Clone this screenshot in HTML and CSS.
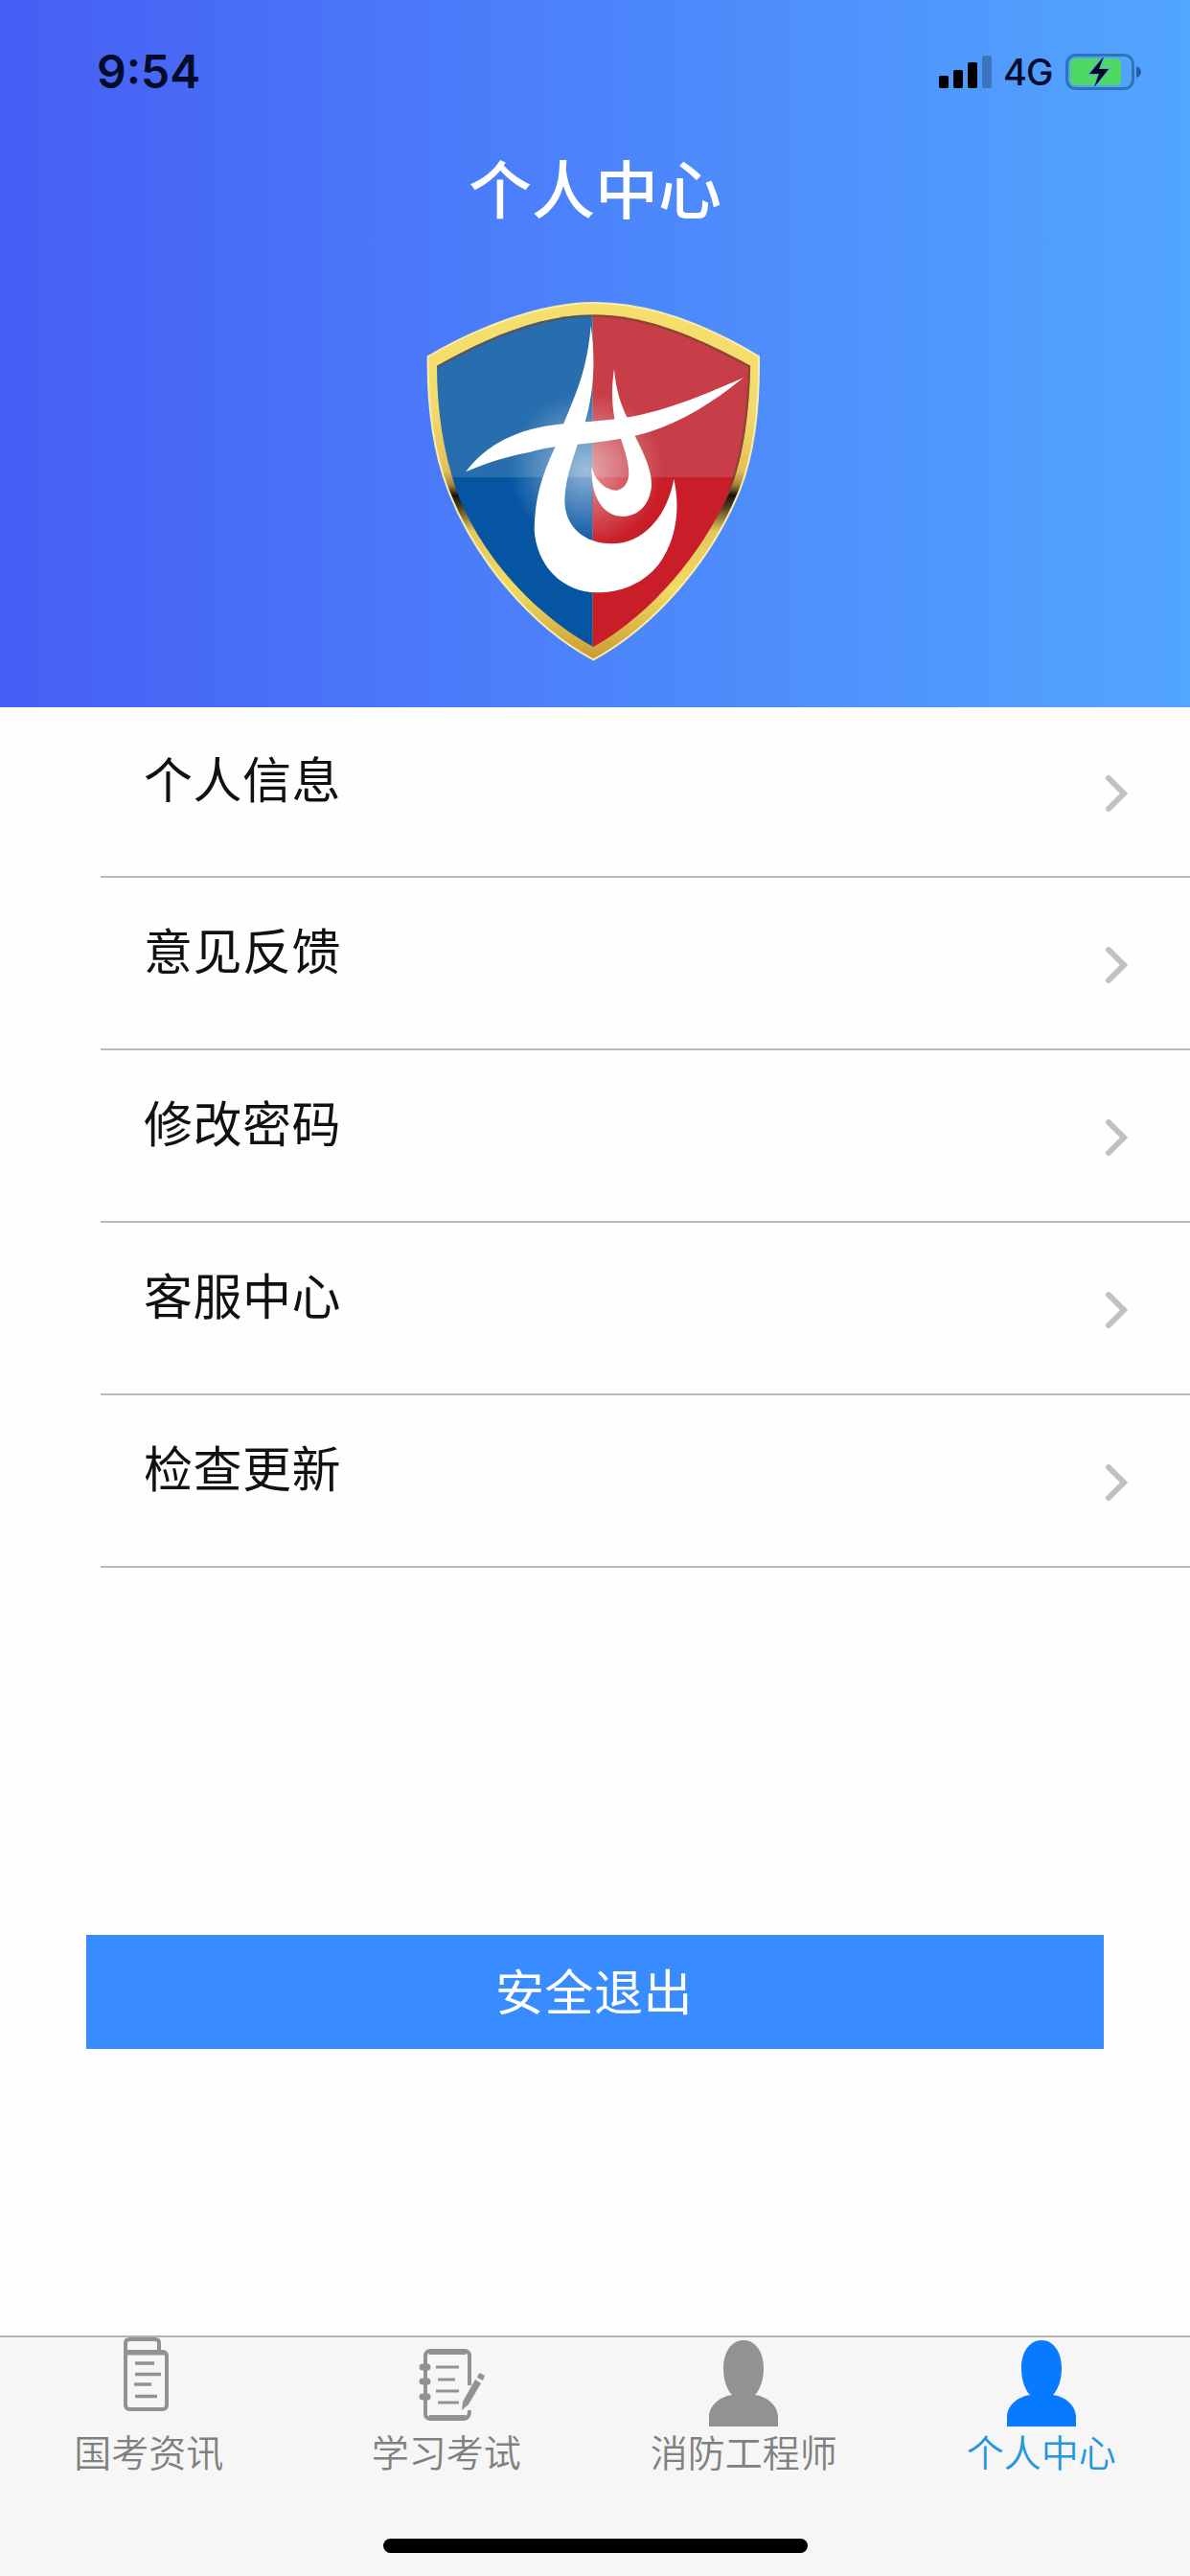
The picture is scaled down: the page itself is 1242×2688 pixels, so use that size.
FILE: index.html
```html
<!DOCTYPE html>
<html lang="zh-CN">
  <head>
    <meta charset="UTF-8" />
    <meta name="viewport" content="width=device-width, initial-scale=1.0" />
    <title>个人中心</title>
    <link rel="stylesheet" href="styles.css">
  </head>
  <body>
    <header class="header">
      <div class="status-bar">
        <span class="time">9:54</span>
        <div class="status-right">
          <svg class="signal" viewBox="0 0 56 34">
            <rect x="0" y="21" width="10" height="13" rx="2" />
            <rect x="15" y="15" width="10" height="19" rx="2" />
            <rect x="30" y="7" width="10" height="27" rx="2" />
            <rect x="45" y="0" width="10" height="34" rx="2" opacity="0.25" />
          </svg>
          <span class="network">4G</span>
          <svg class="battery" viewBox="0 0 80 38">
            <rect class="battery-case" x="1.5" y="1.5" width="69" height="35" rx="9" />
            <rect class="battery-level" x="5" y="5" width="53" height="28" rx="5" />
            <path class="battery-tip" d="M74 13q5 2 5 6t-5 6z" />
            <path class="battery-bolt" d="M40 3L25 21h10l-5 14 15-19H35z" />
          </svg>
        </div>
      </div>
      <h1 class="title">个人中心</h1>
      <svg class="logo" viewBox="3 0 1200 1260">
        <defs>
          <linearGradient id="gold" x1="0" y1="0" x2="0" y2="1">
            <stop offset="0" stop-color="#f7df6c" />
            <stop offset="0.3" stop-color="#f3da6e" />
            <stop offset="0.47" stop-color="#e5c158" />
            <stop offset="0.51" stop-color="#a58338" />
            <stop offset="0.54" stop-color="#17120a" />
            <stop offset="0.57" stop-color="#4a3c1c" />
            <stop offset="0.64" stop-color="#e2c75c" />
            <stop offset="0.8" stop-color="#f3dc62" />
            <stop offset="1" stop-color="#c99a35" />
          </linearGradient>
          <radialGradient id="glow" cx="575" cy="600" r="240" gradientUnits="userSpaceOnUse">
            <stop offset="0" stop-color="#fff" stop-opacity="0.55" />
            <stop offset="1" stop-color="#fff" stop-opacity="0" />
          </radialGradient>
          <clipPath id="shield">
            <path d="M108 275C260 190 430 115 598 115C770 115 930 190 1090 275C1085 420 1070 560 1020 680C935 860 790 1045 598 1155C400 1045 245 860 175 680C130 560 108 420 108 275Z" />
          </clipPath>
        </defs>
        <path class="shield-rim" fill="url(#gold)" d="M80 246C230 158 430 78 600 78C790 78 970 158 1116 246C1118 420 1100 570 1045 690C960 890 790 1090 598 1195C400 1090 230 880 150 680C100 560 78 420 80 246Z" />
        <g clip-path="url(#shield)">
          <rect x="78" y="78" width="518" height="546" fill="#286eae" />
          <rect x="596" y="78" width="530" height="546" fill="#c83e48" />
          <rect x="78" y="624" width="518" height="580" fill="#0655a2" />
          <rect x="596" y="624" width="530" height="580" fill="#c91e29" />
          <rect x="300" y="350" width="560" height="490" fill="url(#glow)" />
          <path class="shield-edge" d="M108 275C260 190 430 115 598 115C770 115 930 190 1090 275C1085 420 1070 560 1020 680" />
        </g>
        <g fill="#fff">
          <path d="M198 607C270 510 380 465 520 455C700 440 770 445 1068 312C960 400 850 465 735 493C600 525 480 520 400 545C320 560 260 580 198 607Z" />
          <path d="M590 150C605 250 600 360 572 450C545 540 508 620 508 700C510 780 570 832 655 832C760 832 830 740 850 630C870 720 860 820 800 900C750 960 680 985 610 985C500 985 420 900 413 790C415 680 440 610 478 530C520 400 575 330 590 150Z" />
          <path d="M663 285C668 350 685 400 705 440C730 510 782 580 780 650C775 710 740 745 690 747C630 745 590 690 592 590C605 640 640 665 670 665C700 660 712 630 708 600C705 550 680 500 664 440C652 370 658 320 663 285Z" />
        </g>
      </svg>
    </header>

    <main class="content">
      <ul class="menu">
        <li class="menu-item">
          <span>个人信息</span>
          <svg class="arrow" viewBox="0 0 24 40"><path d="M4 4l16 16L4 36" /></svg>
        </li>
        <li class="menu-item">
          <span>意见反馈</span>
          <svg class="arrow" viewBox="0 0 24 40"><path d="M4 4l16 16L4 36" /></svg>
        </li>
        <li class="menu-item">
          <span>修改密码</span>
          <svg class="arrow" viewBox="0 0 24 40"><path d="M4 4l16 16L4 36" /></svg>
        </li>
        <li class="menu-item">
          <span>客服中心</span>
          <svg class="arrow" viewBox="0 0 24 40"><path d="M4 4l16 16L4 36" /></svg>
        </li>
        <li class="menu-item">
          <span>检查更新</span>
          <svg class="arrow" viewBox="0 0 24 40"><path d="M4 4l16 16L4 36" /></svg>
        </li>
      </ul>
      <button class="logout">安全退出</button>
    </main>

    <footer class="footer">
      <nav class="tabs">
        <a class="tab">
          <svg class="tab-icon" viewBox="0 0 90 96">
            <g fill="none" stroke="currentColor" stroke-width="4">
              <path d="M21 17V6q0-4 4-4h27q4 0 4 4v9" />
              <rect x="21" y="15" width="43" height="60" rx="4" />
              <path d="M23 16h39" stroke-width="5" />
              <path d="M31 27h20M31 38.500h27M30 49h18M31 61.500h23" stroke-width="3.500" />
            </g>
          </svg>
          <span>国考资讯</span>
        </a>
        <a class="tab">
          <svg class="tab-icon" viewBox="0 0 90 96">
            <g fill="none" stroke="currentColor" stroke-width="4">
              <path d="M69 50V20q0-6-6-6H29q-6 0-6 6v60q0 5 6 5h34q6 0 6-9" />
              <path d="M27 15h38M27 84h38" stroke-width="6" />
              <path d="M20 31h5M20 46h5M20 62h5" stroke-width="7" stroke-linecap="round" />
              <path d="M34 31h24M36 44h18M34 56h24M36 68h22" stroke-width="3" />
            </g>
            <path fill="currentColor" d="M75 44l6 4-13 22-7 6 1-9zM78 39l2-2 5 3-2 5-6-3z" />
          </svg>
          <span>学习考试</span>
        </a>
        <a class="tab">
          <svg class="tab-icon" viewBox="0 0 90 96">
            <path fill="currentColor" d="M45 3C58 3 66 16 66 32C66 45 62 55 57 60C71 62 81 72 81 83V93H9V83C9 72 19 62 33 60C28 55 24 45 24 32C24 16 32 3 45 3Z" />
          </svg>
          <span>消防工程师</span>
        </a>
        <a class="tab active">
          <svg class="tab-icon" viewBox="0 0 90 96">
            <path fill="currentColor" d="M45 3C58 3 66 16 66 32C66 45 62 55 57 60C71 62 81 72 81 83V93H9V83C9 72 19 62 33 60C28 55 24 45 24 32C24 16 32 3 45 3Z" />
          </svg>
          <span>个人中心</span>
        </a>
      </nav>
      <div class="home-indicator"></div>
    </footer>
  </body>
</html>
```
FILE: styles.css
```css
* {
  box-sizing: border-box;
}
body {
  margin: 0;
  height: 2688px;
  display: flex;
  flex-direction: column;
  font-family: "Noto Sans CJK SC", sans-serif;
  background: #fefefe;
  color: #111;
}
.header {
  height: 738px;
  display: flex;
  flex-direction: column;
  align-items: center;
  background: linear-gradient(to right, #465ef4, #4c84fb 50%, #52a6fe);
}
.status-bar {
  width: 100%;
  height: 149px;
  padding: 0 50px 0 101px;
  display: flex;
  justify-content: space-between;
  align-items: center;
  font-family: Inter, sans-serif;
  color: #030b2b;
}
.time {
  font-size: 48px;
  font-weight: 600;
}
.status-right {
  display: flex;
  align-items: center;
}
.signal {
  width: 56px;
  height: 34px;
  margin-right: 11px;
}
.network {
  width: 65px;
  font-size: 38px;
  font-weight: 500;
  letter-spacing: -1px;
}
.battery {
  width: 80px;
  height: 38px;
}
.battery-case {
  fill: none;
  stroke: #2f73b8;
  stroke-width: 3;
}
.battery-level {
  fill: #4fd964;
}
.battery-tip {
  fill: #245f9f;
}
.battery-bolt {
  fill: #030b1c;
  stroke: #52a3f5;
  stroke-width: 2;
  paint-order: stroke;
}
.title {
  margin: 0;
  height: 90px;
  line-height: 90px;
  font-size: 66px;
  font-weight: 500;
  color: #fff;
}
.logo {
  width: 400px;
  height: 420px;
  margin-top: 51px;
}
.shield-rim {
  stroke: #f8edb0;
  stroke-width: 6;
}
.shield-edge {
  fill: none;
  stroke: #6b4a2c;
  stroke-width: 14;
  stroke-opacity: 0.6;
}
.content {
  flex: 1;
}
.menu {
  list-style: none;
  margin: 0 0 0 105px;
  padding: 0;
}
.menu-item {
  height: 180px;
  padding: 4px 65px 0 45px;
  display: flex;
  justify-content: space-between;
  align-items: center;
  border-bottom: 2px solid #b9b9bb;
  font-size: 51px;
  letter-spacing: 0.5px;
}
.menu-item:first-child {
  height: 178px;
}
.menu-item span {
  padding-bottom: 34px;
}
.arrow {
  width: 24px;
  height: 40px;
  fill: none;
  stroke: #c1c1c3;
  stroke-width: 6;
  stroke-linecap: round;
}
.logout {
  display: block;
  width: 1062px;
  height: 119px;
  margin: 383px 0 0 90px;
  padding: 0 2px 6px 0;
  border: none;
  background: #398cff;
  color: #fff;
  font-family: inherit;
  font-size: 51px;
  letter-spacing: 0.5px;
}
.footer {
  height: 251px;
  display: flex;
  flex-direction: column;
  align-items: center;
  justify-content: space-between;
  padding-bottom: 24px;
  border-top: 2px solid #b2b2b2;
  background: #f6f6f6;
}
.tabs {
  width: 100%;
  display: grid;
  grid-template-columns: repeat(4, 1fr);
}
.tab {
  display: flex;
  flex-direction: column;
  align-items: center;
  font-size: 39px;
  font-weight: 350;
  line-height: 44px;
  color: #929292;
}
.tab span {
  color: #808080;
}
.tab-icon {
  width: 90px;
  height: 96px;
}
.tab.active {
  color: #077aff;
}
.tab.active span {
  color: #2596dd;
}
.home-indicator {
  width: 443px;
  height: 15px;
  border-radius: 8px;
  background: #000;
}
```
